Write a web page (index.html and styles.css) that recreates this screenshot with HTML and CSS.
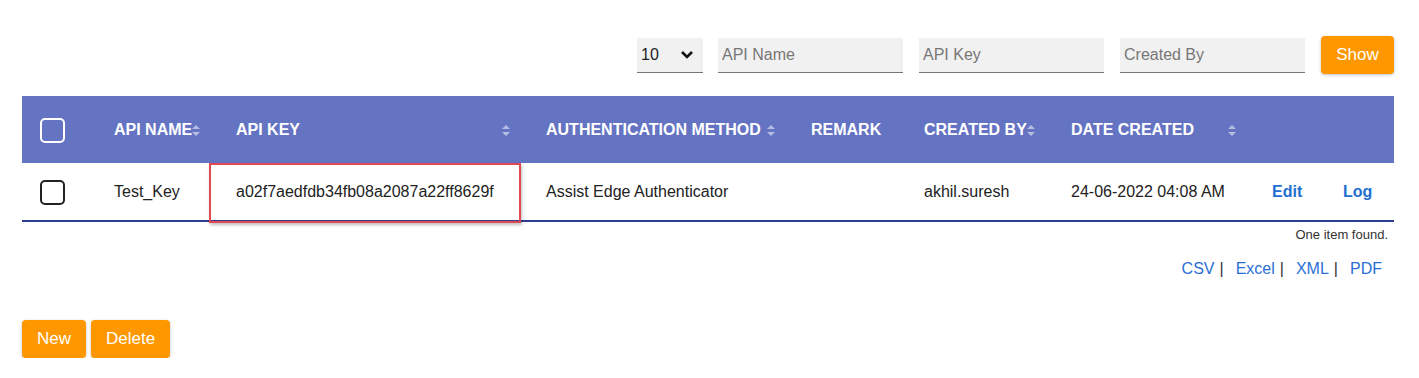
FILE: index.html
```html
<!DOCTYPE html>
<html lang="en">
<head>
    <meta charset="UTF-8">
    <title>API Keys</title>
    <link rel="stylesheet" href="styles.css">
</head>
<body>
    <div id="page">
        <div class="filters">
            <div class="select-box">
                <span>10</span>
                <svg class="chevron" width="14" height="10" viewBox="0 0 14 10"><path d="M2 2 L7 7 L12 2" fill="none" stroke="#111" stroke-width="2.6"/></svg>
            </div>
            <input class="filter-input" type="text" placeholder="API Name">
            <input class="filter-input" type="text" placeholder="API Key">
            <input class="filter-input" type="text" placeholder="Created By">
            <button class="btn btn-show">Show</button>
        </div>

        <table class="grid">
            <colgroup>
                <col style="width:74px">
                <col style="width:122px">
                <col style="width:310px">
                <col style="width:265px">
                <col style="width:113px">
                <col style="width:147px">
                <col style="width:201px">
                <col style="width:71px">
                <col>
            </colgroup>
            <thead>
                <tr>
                    <th><span class="check check-light"></span></th>
                    <th><span class="head">API NAME<i class="sort"></i></span></th>
                    <th><span class="head">API KEY<i class="sort"></i></span></th>
                    <th><span class="head">AUTHENTICATION METHOD<i class="sort"></i></span></th>
                    <th>REMARK</th>
                    <th><span class="head">CREATED BY<i class="sort"></i></span></th>
                    <th><span class="head">DATE CREATED<i class="sort"></i></span></th>
                    <th></th>
                    <th></th>
                </tr>
            </thead>
            <tbody>
                <tr>
                    <td><span class="check"></span></td>
                    <td>Test_Key</td>
                    <td class="key-cell">a02f7aedfdb34fb08a2087a22ff8629f<span class="highlight"></span></td>
                    <td>Assist Edge Authenticator</td>
                    <td></td>
                    <td>akhil.suresh</td>
                    <td>24-06-2022 04:08 AM</td>
                    <td><a class="action" href="#">Edit</a></td>
                    <td><a class="action" href="#">Log</a></td>
                </tr>
            </tbody>
        </table>

        <div class="count">One item found.</div>
        <div class="exports">
            <a href="#">CSV</a><span class="pipe">|</span><a href="#">Excel</a><span class="pipe">|</span><a href="#">XML</a><span class="pipe">|</span><a href="#">PDF</a>
        </div>

        <div class="actions">
            <button class="btn">New</button>
            <button class="btn">Delete</button>
        </div>
    </div>
</body>
</html>
```

FILE: styles.css
```css
body {
    margin: 0;
    font-family: "Liberation Sans", Arial, sans-serif;
    background-color: #ffffff;
    color: #222;
}

#page {
    padding: 36px 25px 0 22px;
}

.filters {
    display: flex;
    justify-content: flex-end;
    align-items: center;
    height: 38px;
}

.select-box {
    width: 66px;
    height: 35px;
    box-sizing: border-box;
    background-color: #f1f1f1;
    border-bottom: 1px solid #777;
    display: flex;
    align-items: center;
    justify-content: space-between;
    padding: 0 9px 0 4px;
    font-size: 16px;
}

.filter-input {
    width: 185px;
    height: 35px;
    box-sizing: border-box;
    background-color: #f1f1f1;
    border: none;
    border-bottom: 1px solid #777;
    margin-left: 16px;
    padding: 0 4px;
    font-family: "Liberation Sans", Arial, sans-serif;
    font-size: 16px;
    color: #222;
}

.filter-input::placeholder {
    color: #777;
}

.filter-input:nth-of-type(1) {
    margin-left: 15px;
}

.btn {
    background-color: #ff9800;
    color: #fff;
    border: none;
    border-radius: 4px;
    height: 38px;
    padding: 0 15px;
    font-family: "Liberation Sans", Arial, sans-serif;
    font-size: 17px;
    box-shadow: 0 1px 3px rgba(0, 0, 0, 0.25);
    cursor: pointer;
}

.btn-show {
    margin-left: 16px;
    width: 73px;
    padding: 0;
}

.grid {
    margin-top: 22px;
    width: 100%;
    border-collapse: collapse;
    table-layout: fixed;
    font-size: 16px;
}

.grid th {
    background-color: #6573c3;
    color: #fff;
    font-weight: bold;
    text-align: left;
    height: 66px;
    padding: 1px 18px 0;
    white-space: nowrap;
}

.grid td {
    height: 54px;
    padding: 2px 18px 1px;
    border-bottom: 2px solid #2c3d8f;
    white-space: nowrap;
    color: #222;
}

.head {
    display: flex;
    justify-content: space-between;
    align-items: center;
}

.sort {
    display: inline-block;
    width: 8px;
    height: 11px;
    position: relative;
}

.sort::before,
.sort::after {
    content: "";
    position: absolute;
    left: 0;
    border-left: 4px solid transparent;
    border-right: 4px solid transparent;
}

.sort::before {
    top: 0;
    border-bottom: 4px solid #b6bde4;
}

.sort::after {
    bottom: 0;
    border-top: 4px solid #b6bde4;
}

.check {
    display: block;
    width: 21px;
    height: 21px;
    border: 2px solid #222;
    border-radius: 5px;
}

.check-light {
    border-color: #fff;
}

.key-cell {
    position: relative;
}

.highlight {
    position: absolute;
    left: -9px;
    right: 7px;
    top: 0;
    bottom: -3px;
    border: 2px solid #e14a52;
    box-shadow: 1px 2px 3px rgba(0, 0, 0, 0.25);
}

.action {
    color: #1f6fd0;
    font-weight: bold;
    text-decoration: none;
}

.count {
    text-align: right;
    font-size: 13px;
    color: #333;
    margin-top: 5px;
    padding-right: 6px;
}

.exports {
    text-align: right;
    padding-right: 12px;
    margin-top: 18px;
    font-size: 16px;
}

.exports a {
    color: #2b6fd6;
    text-decoration: none;
}

.pipe {
    color: #333;
    margin: 0 12px 0 5px;
}

.actions {
    margin-top: 42px;
    display: flex;
    gap: 5px;
}

.actions .btn {
    padding: 0 15px;
}
```
